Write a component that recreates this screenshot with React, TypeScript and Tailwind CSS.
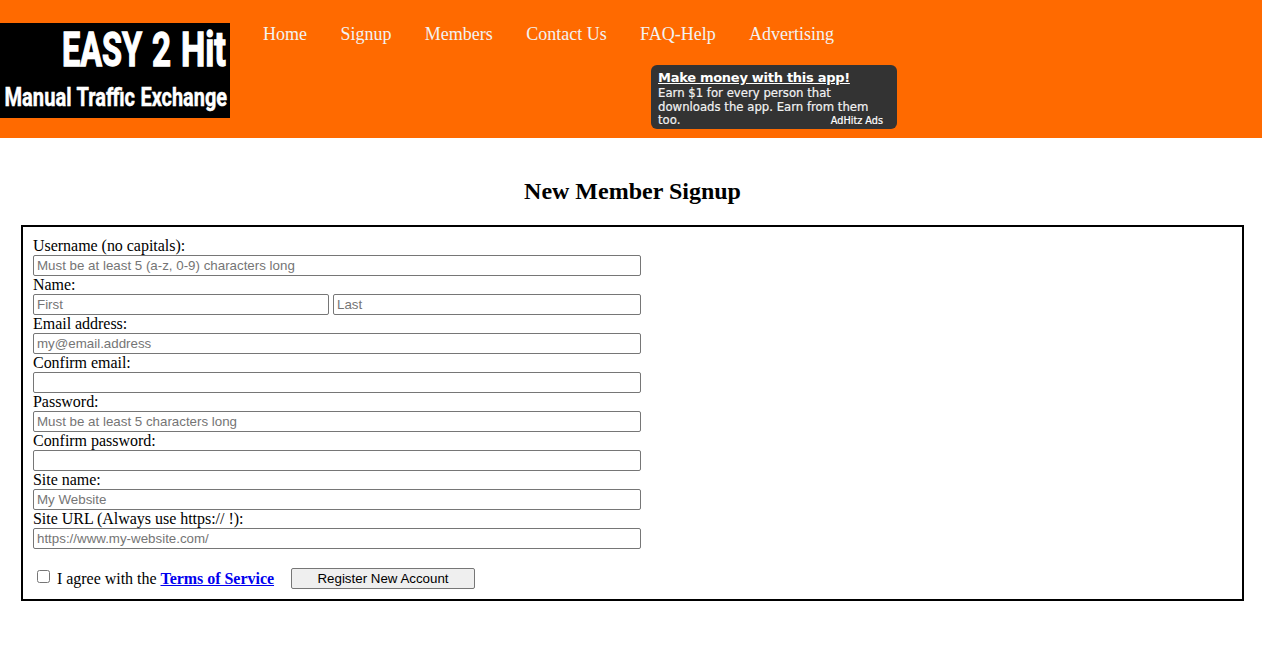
import React, { useState } from 'react';

const NAV_LINKS = ['Home', 'Signup', 'Members', 'Contact Us', 'FAQ-Help', 'Advertising'];

interface TextFieldProps {
  name: string;
  type?: string;
  placeholder?: string;
  className?: string;
}

const TextField: React.FC<TextFieldProps> = ({ name, type = 'text', placeholder, className = 'w-[608px]' }) => (
  <input
    name={name}
    type={type}
    placeholder={placeholder}
    aria-label={name}
    className={`block h-[21px] rounded-[2px] border border-[#767676] bg-white px-[3px] font-['Liberation_Sans',sans-serif] text-[13.333px] leading-[15px] tracking-normal text-black placeholder:text-[#757575] ${className}`}
  />
);

const Field: React.FC<{ label: string; children: React.ReactNode }> = ({ label, children }) => (
  <div>
    <div className="h-[18px] leading-[18px]">{label}</div>
    {children}
  </div>
);

// Each word has its own width, to get the narrow lettering
const Logo = () => (
  <svg width="230" height="95" viewBox="0 0 230 95" className="mt-[23px] block shrink-0 bg-black">
    <g fill="#fff" stroke="#fff" fontFamily="Roboto, sans-serif" fontWeight="700">
      <g fontSize="49" strokeWidth="1.4">
        <text x="62" y="43" textLength="80" lengthAdjust="spacingAndGlyphs">EASY</text>
        <text x="152" y="43" textLength="19" lengthAdjust="spacingAndGlyphs">2</text>
        <text x="181" y="43" textLength="45" lengthAdjust="spacingAndGlyphs">Hit</text>
      </g>
      <g fontSize="26" strokeWidth="0.5">
        <text x="4.5" y="83" textLength="67" lengthAdjust="spacingAndGlyphs">Manual</text>
        <text x="76.5" y="83" textLength="58.5" lengthAdjust="spacingAndGlyphs">Traffic</text>
        <text x="140.5" y="83" textLength="86.5" lengthAdjust="spacingAndGlyphs">Exchange</text>
      </g>
    </g>
  </svg>
);

const AdBox = () => (
  <div className="ml-[388px] mt-[20px] h-[63.5px] w-[246px] rounded-[6px] bg-[#333] pl-[7px] pr-[14px] pt-[5px] font-['DejaVu_Sans',sans-serif] text-[11.7px] leading-[13.5px] text-[#f2f2f2]">
    <a href="#" className="block h-[17px] whitespace-nowrap text-[13px] font-bold leading-[15px] tracking-[-0.28px] text-white underline">
      Make money with this app!
    </a>
    <div className="whitespace-nowrap [-webkit-text-stroke:0.2px]">Earn $1 for every person that</div>
    <div className="whitespace-nowrap [-webkit-text-stroke:0.2px]">downloads the app. Earn from them</div>
    <div className="flex justify-between [-webkit-text-stroke:0.2px]">
      <span>too.</span>
      <span className="text-[9.7px] text-white">AdHitz Ads</span>
    </div>
  </div>
);

const Header = () => (
  <header className="flex h-[138px] bg-[#ff6a00]">
    <Logo />
    <div className="pl-[33px] pt-[23px]">
      <nav className="flex h-[22px] gap-[33.4px] whitespace-nowrap text-[18px] leading-[22px] text-[#f2f2f2]">
        {NAV_LINKS.map((link) => (
          <a key={link} href="#">{link}</a>
        ))}
      </nav>
      <AdBox />
    </div>
  </header>
);

export default function App() {
  const [agreed, setAgreed] = useState(false);

  return (
    <div className="min-h-[656px] bg-white font-['Liberation_Serif',serif] text-[16px] text-black">
      <Header />

      <main className="pl-[21px] pr-[18px] pt-[40px]">
        <h2 className="h-[27px] text-center text-[24px] font-bold leading-[27px]">New Member Signup</h2>

        <form
          className="mt-[20px] h-[376px] border-2 border-black px-[10px] pt-[10px] tracking-[-0.03px]"
          onSubmit={(e) => e.preventDefault()}
        >
          <Field label="Username (no capitals):">
            <TextField name="username" placeholder="Must be at least 5 (a-z, 0-9) characters long" />
          </Field>
          <Field label="Name:">
            <div className="flex gap-[4px]">
              <TextField name="first" placeholder="First" className="w-[296px]" />
              <TextField name="last" placeholder="Last" className="w-[308px]" />
            </div>
          </Field>
          <Field label="Email address:">
            <TextField name="email" placeholder="my@email.address" />
          </Field>
          <Field label="Confirm email:">
            <TextField name="email2" />
          </Field>
          <Field label="Password:">
            <TextField name="password" type="password" placeholder="Must be at least 5 characters long" />
          </Field>
          <Field label="Confirm password:">
            <TextField name="password2" type="password" />
          </Field>
          <Field label="Site name:">
            <TextField name="sitename" placeholder="My Website" />
          </Field>
          <Field label="Site URL (Always use https:// !):">
            <TextField name="siteurl" placeholder="https://www.my-website.com/" />
          </Field>

          <div className="mt-[19px] flex h-[21px] items-center">
            <input
              type="checkbox"
              checked={agreed}
              onChange={(e) => setAgreed(e.target.checked)}
              aria-label="I agree"
              className="mb-[4px] ml-[4px] mr-[7px] h-[13px] w-[13px]"
            />
            <span className="w-[218px] whitespace-nowrap leading-[18px]">
              I agree with the{' '}
              <a href="#" className="font-bold text-[#0000ee] underline">Terms of Service</a>
            </span>
            <button
              type="submit"
              className="ml-[16px] h-[21px] w-[184px] rounded-[2px] border border-[#767676] bg-[#efefef] font-['Liberation_Sans',sans-serif] text-[13.333px] leading-[15px] tracking-normal"
            >
              Register New Account
            </button>
          </div>
        </form>
      </main>
    </div>
  );
}
